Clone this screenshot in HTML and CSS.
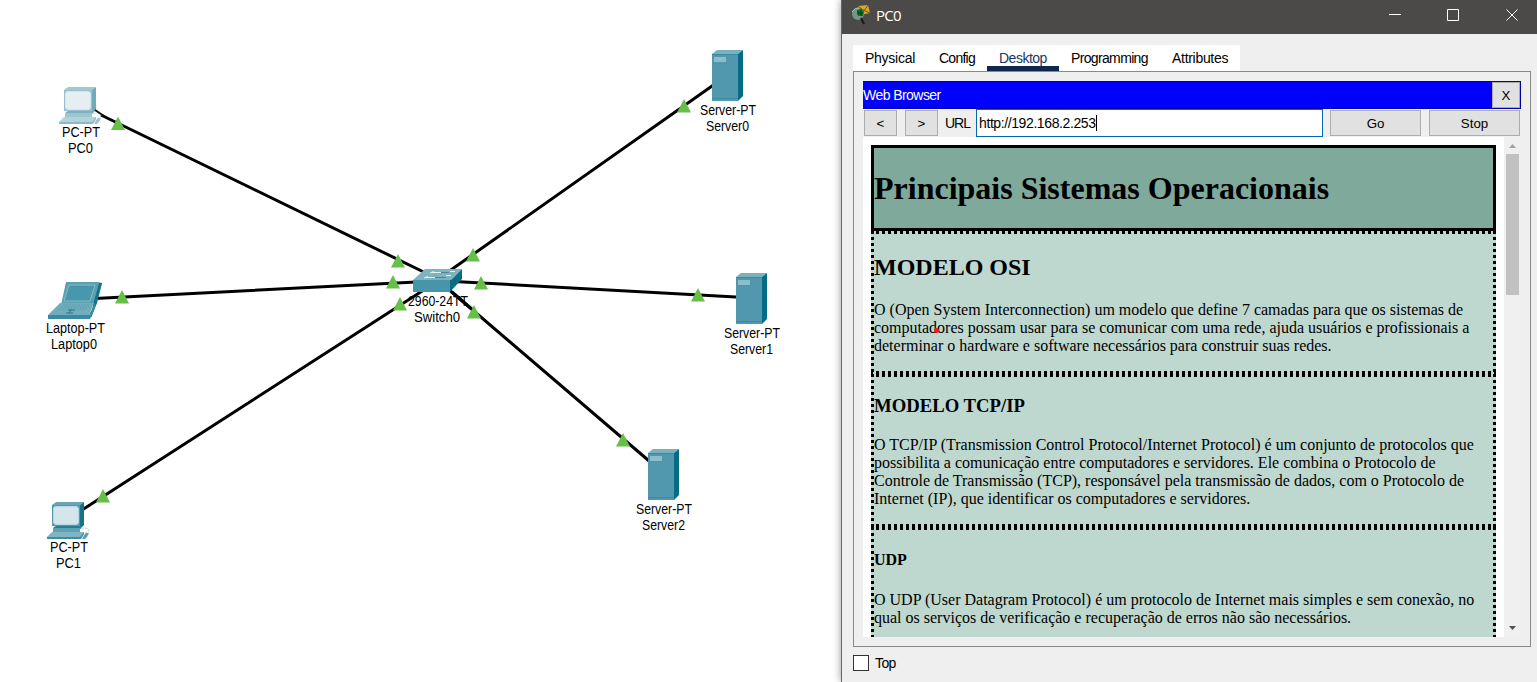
FILE: index.html
```html
<!DOCTYPE html>
<html lang="pt-BR">
<head>
<meta charset="utf-8">
<title>PC0</title>
<link rel="stylesheet" href="styles.css">
</head>
<body>
<main class="screen">
  <svg class="topology" width="841" height="682" viewBox="0 0 841 682">
    <defs>
      <symbol id="server" viewBox="0 0 32 52" width="32" height="52">
        <path d="M1 5 6 1H32L27 5Z" fill="#79b1bd"/>
        <path d="M27 5 32 1V47L27 52Z" fill="#066c84"/>
        <path d="M1 5H27V52H1Z" fill="#5198ae"/>
        <path d="M1 5.500H27M1 49.500H27" stroke="#398ba2"/>
        <path d="M3 8H15V13H3Z" fill="#8dbdca"/>
      </symbol>
      <symbol id="pc" viewBox="0 0 46 40" width="46" height="40">
        <path d="M6 4 10 1H38L34 4Z" fill="#69a5b4"/>
        <path d="M34 4 38 1V24L33 29Z" fill="#14758a"/>
        <path d="M6 4H34V25H6Z" fill="#5299af"/>
        <rect x="7.500" y="5.500" width="25" height="18" rx="2.500" fill="#d4e6ec" stroke="#b8d6df"/>
        <path d="M10 25H36L34 28H7L8 26Z" fill="#2a7d92"/>
        <path d="M7 27H34V31H7Z" fill="#5ba2b4"/>
        <path d="M6 31H38L35 36H1Z" fill="#82b5c1"/>
        <path d="M1 36H34L38 31V33L35 38H1Z" fill="#3c8da2"/>
        <path d="M38 34 40 32H43L41 36 39 38H36Z" fill="#5ba2b4"/>
        <path d="M35 28Q39 26 42 28M43 28V30L39 32" fill="none" stroke="#bad2da" stroke-dasharray="3 1"/>
      </symbol>
      <symbol id="laptop" viewBox="0 0 56 38" width="56" height="38">
        <path d="M19 1H51L55 2 50 20 46 24H14Z" fill="#5ba1b2"/>
        <path d="M55 2 50 22 44 37V34L47 20 52 2Z" fill="#12758b"/>
        <path d="M22 4H48L43 20H17Z" fill="#4798ad" stroke="#8bb9c5"/>
        <path d="M13 22H47L42 34H1Z" fill="#70aebb"/>
        <path d="M1 34H42L48 22V27L43 38H1Z" fill="#388ba2"/>
        <path d="M16 24H43M14 26H42M12 28H40" stroke="#5a9dac" stroke-dasharray="2 1"/>
        <path d="M21 29H28M19 32H26M24 29 22 32" stroke="#25758c" fill="none"/>
      </symbol>
      <symbol id="arrow" viewBox="0 0 14 14" width="14" height="14"><path d="M7 0 14 13.500H0Z" fill="#65bf49"/></symbol>
    </defs>
    <g class="wire">
      <path d="M101 115 436 278M95 298.500 436 281M82 510 430 286M448 272 722 79M445 281 745 297.500M440 282 655 466"/>
    </g>
    <use href="#pc" x="58" y="86" opacity=".6"/>
    <path d="M95 110 104 116" stroke="#111" stroke-width="2"/>
    <use href="#laptop" x="47" y="281"/>
    <use href="#pc" x="46" y="501"/>
    <use href="#server" x="711" y="49"/>
    <use href="#server" x="735" y="272"/>
    <use href="#server" x="647" y="448"/>
    <g class="label">
      <text x="62" y="137" textLength="38" lengthAdjust="spacingAndGlyphs">PC-PT</text><text x="68" y="153" textLength="25" lengthAdjust="spacingAndGlyphs">PC0</text>
      <text x="46" y="333" textLength="59" lengthAdjust="spacingAndGlyphs">Laptop-PT</text><text x="51" y="349" textLength="46" lengthAdjust="spacingAndGlyphs">Laptop0</text>
      <text x="50" y="552" textLength="38" lengthAdjust="spacingAndGlyphs">PC-PT</text><text x="56" y="568" textLength="25" lengthAdjust="spacingAndGlyphs">PC1</text>
      <text x="700" y="115" textLength="56" lengthAdjust="spacingAndGlyphs">Server-PT</text><text x="706" y="131" textLength="43" lengthAdjust="spacingAndGlyphs">Server0</text>
      <text x="724" y="338" textLength="56" lengthAdjust="spacingAndGlyphs">Server-PT</text><text x="730" y="354" textLength="43" lengthAdjust="spacingAndGlyphs">Server1</text>
      <text x="636" y="514" textLength="56" lengthAdjust="spacingAndGlyphs">Server-PT</text><text x="642" y="530" textLength="43" lengthAdjust="spacingAndGlyphs">Server2</text>
      <text x="408" y="306" textLength="60" lengthAdjust="spacingAndGlyphs">2960-24TT</text><text x="414" y="322" textLength="46" lengthAdjust="spacingAndGlyphs">Switch0</text>
    </g>
    <path d="M452 292 474 311" stroke="#000" stroke-width="3"/>
    <path d="M413 280 425 269H462L450 281Z" fill="#7fb4bf"/>
    <path d="M450 281 462 269V279L450 292Z" fill="#0b6e85"/>
    <path d="M413 280H450V292H413Z" fill="#4695ab"/>
    <path d="M430 273 434 271.500M432 272.500H441M450 271.500H455M424 278 428 276.500M426 277.500H435M446 275.500H451" stroke="#e6f1f2" fill="none"/>
    <path d="M441 272.500H449M435 277.500H446" stroke="#4b8593"/>
    <use href="#arrow" x="111" y="116.500"/><use href="#arrow" x="115" y="290"/><use href="#arrow" x="96" y="489"/>
    <use href="#arrow" x="391" y="254"/><use href="#arrow" x="386" y="275"/><use href="#arrow" x="393" y="297"/>
    <use href="#arrow" x="466" y="248"/><use href="#arrow" x="474" y="276"/><use href="#arrow" x="467" y="305"/>
    <use href="#arrow" x="677" y="99"/><use href="#arrow" x="691" y="288"/><use href="#arrow" x="616" y="433"/>
  </svg>

  <section class="window">
    <header class="titlebar">
      <svg class="app-icon" width="20" height="20" viewBox="0 0 20 20">
        <path d="M7 1 17 0 19 8 9 10Z" fill="#d9a634"/><path d="M7 1 13 6 17 0M12 5 19 8" fill="none" stroke="#755017"/>
        <circle cx="7" cy="9" r="6" fill="#789485"/><path d="M1 7Q4 2 8 3" stroke="#b9c5c0" fill="none"/>
        <path d="M6 6 10 3 13 7 12 11 7 11Z" fill="#087e19"/><path d="M7 5V10M10 5V11M7 8H12" stroke="#003a0c"/>
        <path d="M10 13 13 19" stroke="#161a18" stroke-width="2"/>
      </svg>
      <span class="title">PC0</span>
      <svg class="controls" width="130" height="14" viewBox="0 0 130 14" fill="none" stroke="#fff">
        <path d="M0 6.500H12M58.500 1.500H69.500V12.500H58.500ZM117.500 1.500 128.500 12.500M128.500 1.500 117.500 12.500"/>
      </svg>
    </header>
    <nav class="tabs">
      <span class="tab physical">Physical</span><span class="tab config">Config</span><span class="tab desktop">Desktop</span><span class="tab programming">Programming</span><span class="tab attributes">Attributes</span>
    </nav>
    <div class="pane">
      <div class="browser-title"><span>Web Browser</span><button class="btn close">X</button></div>
      <div class="toolbar">
        <button class="btn step">&lt;</button><button class="btn step">&gt;</button>
        <span class="url-label">URL</span>
        <div class="url"><span>http://192.168.2.253</span><i class="caret"></i></div>
        <button class="btn action">Go</button><button class="btn action">Stop</button>
      </div>
      <div class="viewport">
        <article class="page">
          <div class="banner"><h1>Principais Sistemas Operacionais</h1></div>
          <section class="topic osi">
            <h2>MODELO OSI</h2>
            <p>O (Open System Interconnection) um modelo que define 7 camadas para que os sistemas de<br>
            computadores possam usar para se comunicar com uma rede, ajuda usuários e profissionais a<br>
            determinar o hardware e software necessários para construir suas redes.</p>
            <i class="pointer"></i>
          </section>
          <section class="topic tcp">
            <h3>MODELO TCP/IP</h3>
            <p>O TCP/IP (Transmission Control Protocol/Internet Protocol) é um conjunto de protocolos que<br>
            possibilita a comunicação entre computadores e servidores. Ele combina o Protocolo de<br>
            Controle de Transmissão (TCP), responsável pela transmissão de dados, com o Protocolo de<br>
            Internet (IP), que identificar os computadores e servidores.</p>
          </section>
          <section class="topic udp">
            <h4>UDP</h4>
            <p>O UDP (User Datagram Protocol) é um protocolo de Internet mais simples e sem conexão, no<br>
            qual os serviços de verificação e recuperação de erros não são necessários.</p>
          </section>
        </article>
        <div class="scrollbar">
          <svg width="17" height="17"><path d="M5 11 8.500 7 12 11Z" fill="#a3a3a3"/></svg>
          <div class="thumb"></div>
          <svg class="down" width="17" height="17"><path d="M5 6 8.500 10 12 6Z" fill="#505050"/></svg>
        </div>
      </div>
    </div>
    <label class="top"><i class="box"></i><span>Top</span></label>
  </section>
</main>
</body>
</html>
```
FILE: styles.css
```css
* { box-sizing: border-box; }
body { margin: 0; overflow: hidden; background: #fff; font-family: "Liberation Sans", Arial, sans-serif; }
.screen { display: flex; width: 1537px; height: 682px; }
.topology { flex: none; display: block; }
.wire { fill: none; stroke: #000; stroke-width: 3; }
.label { font-size: 14px; fill: #000; }

.window {
  width: 696px; height: 682px; background: #efefef; border-left: 1px solid #656565;
  box-shadow: 0 0 8px rgba(0,0,0,.4); font-size: 14px; letter-spacing: -.4px; color: #000;
}
.titlebar { height: 34px; background: #4c4a48; color: #fff; display: flex; align-items: flex-start; padding: 5px 18px 0 9px; }
.title { margin-left: 5px; font: 15px/21px "Open Sans", sans-serif; letter-spacing: -.7px; }
.controls { margin: 3px 0 0 auto; }
.tabs { display: flex; width: 387px; height: 26px; margin: 11px 0 0 11px; background: #fff; line-height: 27px; }
.tab { padding-left: 12px; white-space: nowrap; }
.physical { width: 74px; letter-spacing: -.25px; }
.config { width: 60px; letter-spacing: -.75px; }
.desktop { width: 72px; border-bottom: 5px solid #0d274d; color: #1c365f; letter-spacing: -.5px; }
.programming { width: 101px; letter-spacing: -.65px; }
.attributes { width: 80px; letter-spacing: -.3px; }
.pane { width: 678px; height: 576px; margin-left: 11px; border: 1px solid #878b87; padding: 9px; }
.browser-title { display: flex; justify-content: space-between; height: 28px; background: #00f; border: 1px solid #0000a8; border-left: 0; color: #fff; line-height: 27px; letter-spacing: -.55px; }
.btn { margin: 0; padding: 0; border: 1px solid #adadad; background: #e1e1e1; font: 13.3px "Liberation Sans", Arial, sans-serif; color: #000; }
.close { width: 28px; height: 26px; }
.toolbar { display: flex; align-items: center; height: 28px; padding: 0 1px; }
.step { width: 33px; height: 26px; margin-right: 8px; }
.url-label { width: 30px; margin-left: -1px; letter-spacing: -1px; }
.url { display: flex; align-items: center; width: 347px; height: 28px; margin: 0 7px 0 1px; border: 1px solid #0067b8; background: #fff; padding-left: 2px; }
.caret { width: 1px; height: 16px; background: #000; }
.action { width: 91px; height: 26px; }
.action + .action { margin-left: 8px; }

.viewport { display: flex; height: 500px; overflow: hidden; }
.page { width: 641px; height: 500px; background: #fff; padding: 8px 8px 0; overflow: hidden; font: 16px/18px "Liberation Serif", "Times New Roman", serif; letter-spacing: 0; color: #000; white-space: nowrap; }
.page h1, .page h2, .page h3, .page h4, .page p { margin: 0; }
.banner { height: 86px; border: 3px solid #000; background: #7fa99b; }
h1 { padding-top: 22px; font-size: 32px; line-height: 37px; }
.topic {
  --h: repeating-linear-gradient(90deg, #000 0 3px, transparent 3px 6px);
  --v: repeating-linear-gradient(#000 0 3px, transparent 3px 6px);
  position: relative; padding: 3px;
  background: var(--h) -1px 0 / 640px 3px no-repeat, var(--h) -1px 100% / 640px 3px no-repeat,
    var(--v) 0 0 / 3px 100% no-repeat, var(--v) 100% 0 / 3px 100% no-repeat, #bfd8cf;
}
.osi { height: 143px; }
.tcp { height: 153px; }
.udp { height: 200px; }
h2 { padding-top: 20px; font-size: 24px; line-height: 27px; }
.osi p { padding-top: 20px; }
h3 { padding-top: 18px; font-size: 18.72px; line-height: 21px; }
.tcp p { padding-top: 20px; }
h4 { padding-top: 21px; font-size: 16px; line-height: 18px; }
.udp p { padding-top: 22px; }
.pointer { position: absolute; left: 63px; top: 97px; width: 5px; height: 5px; border-radius: 50%; background: #ed1c24; }

.scrollbar { display: flex; flex-direction: column; width: 17px; background: #f0f0f0; }
.thumb { width: 13px; height: 141px; margin-left: 2px; background: #c1c1c1; }
.down { margin-top: auto; }
.top { display: flex; align-items: center; gap: 6px; height: 16px; margin: 8px 0 0 11px; letter-spacing: -.6px; }
.box { width: 16px; height: 16px; border: 1px solid #333; background: #fff; }
```
